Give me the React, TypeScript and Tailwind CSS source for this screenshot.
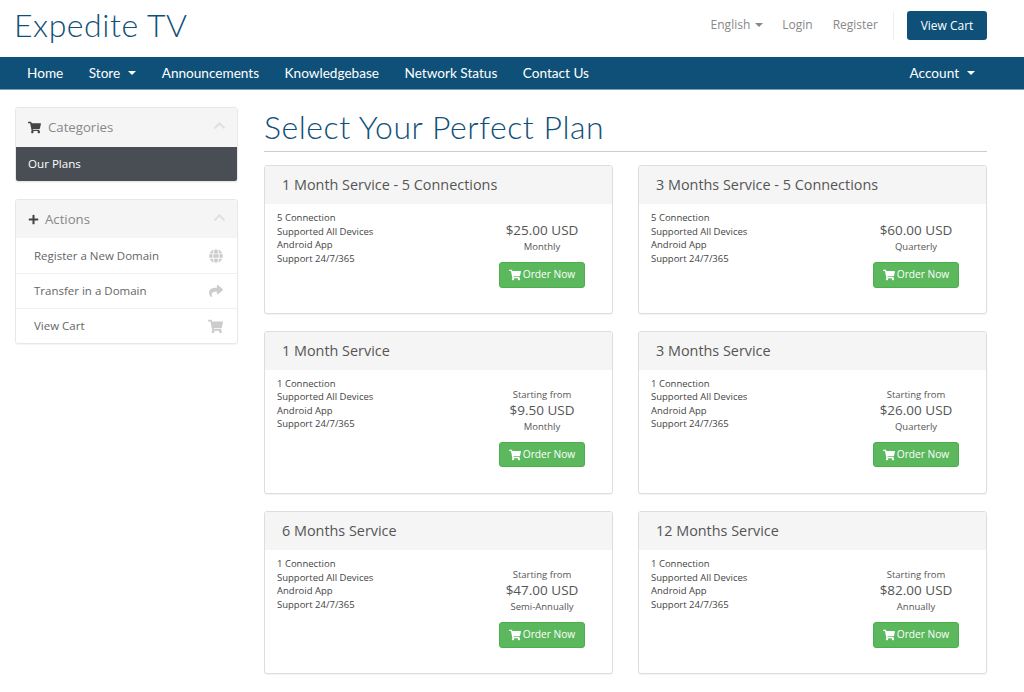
import { FaShoppingCart, FaPlus, FaGlobe, FaShare, FaChevronUp } from 'react-icons/fa'

const plans = [
  [
    { name: '1 Month Service - 5 Connections', conn: '5 Connection', price: '$25.00 USD', cycle: 'Monthly', from: false },
    { name: '3 Months Service - 5 Connections', conn: '5 Connection', price: '$60.00 USD', cycle: 'Quarterly', from: false },
  ],
  [
    { name: '1 Month Service', conn: '1 Connection', price: '$9.50 USD', cycle: 'Monthly', from: true },
    { name: '3 Months Service', conn: '1 Connection', price: '$26.00 USD', cycle: 'Quarterly', from: true },
  ],
  [
    { name: '6 Months Service', conn: '1 Connection', price: '$47.00 USD', cycle: 'Semi-Annually', from: true },
    { name: '12 Months Service', conn: '1 Connection', price: '$82.00 USD', cycle: 'Annually', from: true },
  ],
]

const actions = [
  { label: 'Register a New Domain', icon: <FaGlobe className="w-[14px] h-[14px]" /> },
  { label: 'Transfer in a Domain', icon: <FaShare className="w-[14px] h-[14px]" /> },
  { label: 'View Cart', icon: <FaShoppingCart className="w-[15px] h-[15px]" /> },
]

function Caret({ className }: { className: string }) {
  return <span className={`inline-block w-0 h-0 border-x-[4px] border-x-transparent border-t-[4px] ${className}`} />
}

function NavItem({ label, caret }: { label: string; caret?: boolean }) {
  return (
    <a className="flex items-center gap-[8px] text-[13.6px] text-white">
      {label}
      {caret && <Caret className="border-t-white" />}
    </a>
  )
}

function PlanCard({ plan }: { plan: (typeof plans)[number][number] }) {
  return (
    <div className="flex-1 bg-white border border-[#dddddd] rounded-[3px] shadow-[0_1px_1px_rgba(0,0,0,0.05)] overflow-hidden">
      <div className="h-[38px] bg-[#f5f5f5] pl-[17px] flex items-center text-[14.4px] text-[#555555]">{plan.name}</div>
      <div className={`flex pl-[12px] pr-[27px] pt-[7px] ${plan.from ? 'pb-[25.7px]' : 'pb-[25px]'}`}>
        <div className="flex-1 text-[9.5px] leading-[13.6px] text-[#444444]">
          <div>{plan.conn}</div>
          <div>Supported All Devices</div>
          <div>Android App</div>
          <div>Support 24/7/365</div>
        </div>
        <div className={`w-[86px] flex flex-col items-center ${plan.from ? 'pt-[11.3px]' : 'pt-[10px]'}`}>
          <div className="flex flex-col items-center whitespace-nowrap">
            {plan.from && <div className="text-[9.5px] leading-[13px] text-[#555555]">Starting from</div>}
            <div className="text-[13.5px] leading-[19px] text-[#555555]">{plan.price}</div>
            <div className="text-[9.5px] leading-[14px] text-[#555555]">{plan.cycle}</div>
          </div>
          <button className="mt-[8px] w-[86px] h-[25.5px] bg-[#5cb85c] border border-[#4cae4c] rounded-[3px] text-white text-[10.2px] flex items-center justify-center gap-[2px]">
            <FaShoppingCart className="w-[12px] h-[12px]" />
            Order Now
          </button>
        </div>
      </div>
    </div>
  )
}

export default function App() {
  return (
    <div className="h-[692px] overflow-hidden bg-white font-['Open_Sans',sans-serif]">
      <header className="h-[57px] flex items-center justify-between pl-[14px] pr-[37px]">
        <div className="font-['Lato',sans-serif] font-light text-[32px] tracking-[0.55px] text-[#0f5078] -mt-[7px]">Expedite TV</div>
        <div className="flex items-center -mt-[6px]">
          <div className="flex items-center text-[12px] text-[#888888] mb-[2px]">
            <span className="flex items-center gap-[5px]">English <Caret className="border-t-[#888888]" /></span>
            <span className="ml-[19px]">Login</span>
            <span className="ml-[20px]">Register</span>
          </div>
          <span className="ml-[15px] mr-[13px] w-px h-[29px] bg-[#eeeeee]" />
          <button className="w-[80px] h-[29px] bg-[#0f5078] rounded-[3px] text-white text-[12px]">View Cart</button>
        </div>
      </header>

      <nav className="h-[33px] bg-[#0f5078] border-b border-[#7f9fb5] flex items-center justify-between pl-[27px] pr-[49px] font-['Lato',sans-serif]">
        <div className="flex items-center gap-[25.5px]">
          <NavItem label="Home" />
          <NavItem label="Store" caret />
          <NavItem label="Announcements" />
          <NavItem label="Knowledgebase" />
          <NavItem label="Network Status" />
          <NavItem label="Contact Us" />
        </div>
        <NavItem label="Account" caret />
      </nav>

      <div className="flex pl-[15px] pr-[37px] pt-[17px] gap-[26px]">
        <aside className="w-[223px] shrink-0 flex flex-col gap-[17px]">
          <div className="border border-[#e8e8e8] rounded-[3px] shadow-[0_1px_1px_rgba(0,0,0,0.05)] overflow-hidden">
            <div className="h-[39px] bg-[#f5f5f5] flex items-center justify-between pl-[12px] pr-[11px] text-[13.2px] text-[#888888]">
              <span className="flex items-center gap-[7px]">
                <FaShoppingCart className="w-[13px] h-[13px] text-[#444444]" />
                Categories
              </span>
              <FaChevronUp className="w-[13px] h-[13px] text-[#e0e0e0] -mt-[4px]" />
            </div>
            <div className="h-[34px] bg-[#484e53] flex items-center pl-[12px] text-[11.6px] text-white">Our Plans</div>
          </div>

          <div className="border border-[#e8e8e8] rounded-[3px] shadow-[0_1px_1px_rgba(0,0,0,0.05)] overflow-hidden">
            <div className="h-[38px] bg-[#f5f5f5] pt-[1px] flex items-center justify-between pl-[12px] pr-[11px] text-[13.2px] text-[#888888]">
              <span className="flex items-center gap-[6px]">
                <FaPlus className="w-[11px] h-[11px] text-[#444444]" />
                Actions
              </span>
              <FaChevronUp className="w-[13px] h-[13px] text-[#e0e0e0] -mt-[4px]" />
            </div>
            {actions.map((a, i) => (
              <div key={a.label} className={`h-[35px] flex items-center justify-between pl-[18px] pr-[14px] text-[11.5px] text-[#666666] ${i > 0 ? 'border-t border-[#f0f0f0]' : ''}`}>
                {a.label}
                <span className="text-[#cccccc]">{a.icon}</span>
              </div>
            ))}
          </div>
        </aside>

        <main className="flex-1 min-w-0">
          <h1 className="font-['Lato',sans-serif] font-light text-[32px] leading-[40px] tracking-[0.55px] text-[#0f5078] pb-[4px] border-b border-[#cccccc]">Select Your Perfect Plan</h1>
          <div className="mt-[13px] flex flex-col gap-[17px]">
            {plans.map((row, i) => (
              <div key={i} className="flex gap-[25px]">
                {row.map((p) => <PlanCard key={p.name} plan={p} />)}
              </div>
            ))}
          </div>
        </main>
      </div>
    </div>
  )
}
